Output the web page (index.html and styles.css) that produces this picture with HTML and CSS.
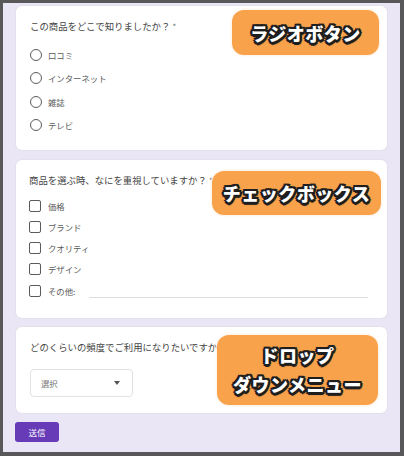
FILE: index.html
```html
<!DOCTYPE html>
<html lang="ja">
<head>
  <meta charset="UTF-8" />
  <meta name="viewport" content="width=device-width, initial-scale=1.0" />
  <title>アンケートフォーム</title>
  <link rel="stylesheet" href="styles.css">
</head>
<body>
  <div class="frame">
    <div class="card card-radio">
      <div class="question">この商品をどこで知りましたか？ <span class="req">*</span></div>
      <div class="options">
        <label class="opt"><span class="radio"></span>口コミ</label>
        <label class="opt"><span class="radio"></span>インターネット</label>
        <label class="opt"><span class="radio"></span>雑誌</label>
        <label class="opt"><span class="radio"></span>テレビ</label>
      </div>
      <div class="callout callout-radio">ラジオボタン</div>
    </div>

    <div class="card card-check">
      <div class="question">商品を選ぶ時、なにを重視していますか？ <span class="req">*</span></div>
      <div class="options">
        <label class="opt opt-check"><span class="check"></span>価格</label>
        <label class="opt opt-check"><span class="check"></span>ブランド</label>
        <label class="opt opt-check"><span class="check"></span>クオリティ</label>
        <label class="opt opt-check"><span class="check"></span>デザイン</label>
        <label class="opt opt-other"><span class="check"></span>その他:<span class="other-line"></span></label>
      </div>
      <div class="callout callout-check">チェックボックス</div>
    </div>

    <div class="card card-select">
      <div class="question">どのくらいの頻度でご利用になりたいですか？</div>
      <div class="select">
        <span>選択</span>
        <span class="arrow"></span>
      </div>
      <div class="callout callout-select">ドロップ<br>ダウンメニュー</div>
    </div>

    <button class="submit">送信</button>
  </div>
</body>
</html>
```

FILE: styles.css
```css
html, body {
  margin: 0;
  padding: 0;
}
body {
  font-family: "Noto Sans CJK JP", "Noto Sans", sans-serif;
  color: #3c3c3c;
}
.frame {
  box-sizing: border-box;
  width: 404px;
  height: 456px;
  border-style: solid;
  border-color: #58585b;
  border-width: 3px 4px 4px 3px;
  background: #ebe6f5;
  padding: 3px 13px 0 13px;
}
.card {
  position: relative;
  background: #fff;
  border-radius: 6px;
  box-shadow: 0 0 0 1px #e4e0ec;
  padding: 13px 14px 0 14px;
}
.card-radio {
  height: 144px;
  box-sizing: border-box;
}
.card-check {
  margin-top: 10px;
  height: 158px;
  box-sizing: border-box;
  padding-left: 13px;
}
.card-select {
  margin-top: 9px;
  height: 86px;
  box-sizing: border-box;
}
.question {
  font-size: 9.4px;
  line-height: 14px;
  color: #444;
  white-space: nowrap;
}
.req {
  color: #666;
  font-size: 8px;
}
.options {
  margin-top: 9px;
}
.opt {
  display: flex;
  align-items: center;
  height: 23.5px;
  font-size: 8.4px;
  color: #5a5a5a;
}
.card-check .options {
  margin-top: 7px;
}
.opt-check {
  height: 21px;
}
.opt-other {
  height: 24px;
}
.radio {
  box-sizing: border-box;
  width: 12px;
  height: 12px;
  border: 1.5px solid #5b5b5b;
  border-radius: 50%;
  margin-right: 6px;
}
.check {
  box-sizing: border-box;
  width: 12px;
  height: 12px;
  border: 1.5px solid #5b5b5b;
  border-radius: 2px;
  margin-right: 7px;
}
.other-line {
  flex: 1;
  align-self: flex-end;
  margin: 0 5px 5px 14px;
  height: 1px;
  background: #dedede;
}
.select {
  margin-top: 15px;
  box-sizing: border-box;
  width: 103px;
  height: 28px;
  border: 1px solid #e2e2e2;
  border-radius: 4px;
  display: flex;
  align-items: center;
  justify-content: space-between;
  padding: 0 12px 0 10px;
  font-size: 8.4px;
  color: #777;
}
.arrow {
  width: 0;
  height: 0;
  border-left: 3px solid transparent;
  border-right: 3px solid transparent;
  border-top: 4px solid #555;
}
.submit {
  display: block;
  margin-top: 9px;
  margin-left: -1px;
  width: 44px;
  height: 20px;
  border: none;
  border-radius: 3px;
  background: #673ab7;
  color: #fff;
  font-family: "Noto Sans CJK JP", sans-serif;
  font-size: 8.5px;
  padding: 0;
}
.callout {
  position: absolute;
  box-sizing: border-box;
  background: #f9a24c;
  border-radius: 12px;
  box-shadow: 0 0 2px 1px rgba(255, 240, 225, 0.9);
  display: flex;
  align-items: center;
  justify-content: center;
  text-align: center;
  color: #fff;
  font-size: 18px;
  font-weight: 900;
  letter-spacing: 0.5px;
  white-space: nowrap;
  text-shadow:
    2.5px 0 0 #1e1e1e, -2.5px 0 0 #1e1e1e, 0 2.5px 0 #1e1e1e, 0 -2.5px 0 #1e1e1e,
    1.8px 1.8px 0 #1e1e1e, -1.8px 1.8px 0 #1e1e1e, 1.8px -1.8px 0 #1e1e1e, -1.8px -1.8px 0 #1e1e1e,
    1px 3px 1px rgba(0, 0, 0, 0.5);
}
.callout-radio {
  left: 216px;
  top: 4px;
  width: 147px;
  height: 45px;
}
.callout-check {
  left: 196px;
  top: 11px;
  width: 169px;
  height: 44px;
}
.callout-select {
  left: 201px;
  top: 8px;
  width: 161px;
  height: 70px;
  line-height: 29px;
}
```
